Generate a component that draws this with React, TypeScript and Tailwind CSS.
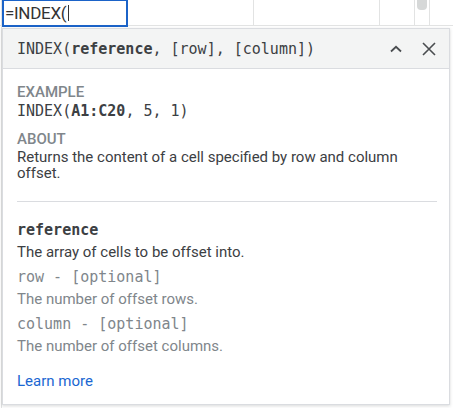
const sans = { fontFamily: "Roboto, 'Noto Sans', Arial, sans-serif" };
const mono = { fontFamily: "'DejaVu Sans Mono', 'Liberation Mono', monospace" };

type Param = { name: string; optional?: boolean; desc: string };

const params: Param[] = [
  { name: "reference", desc: "The array of cells to be offset into." },
  { name: "row", optional: true, desc: "The number of offset rows." },
  { name: "column", optional: true, desc: "The number of offset columns." },
];

const GridRow = () => (
  <div className="flex h-[26px] border-b border-[#e2e3e3]">
    <div className="w-[2px] border-r border-[#e2e3e3]" />
    <div className="w-[126px] border-r border-[#e2e3e3]" />
    <div className="w-[126px] border-r border-[#e2e3e3]" />
    <div className="w-[126px] border-r border-[#e2e3e3]" />
    <div className="w-[35px] border-r border-[#e2e3e3]" />
    <div className="w-[15px] border-r border-[#e2e3e3]" />
    <div className="flex-1" />
  </div>
);

const CellEditor = () => (
  <div
    className="absolute left-[2px] top-[-1px] flex h-[28px] w-[126px] items-center border-2 border-[#1b63c8] bg-white pl-[1px] text-[17px] leading-none text-[#333]"
    style={sans}
  >
    <span className="tracking-[-0.3px]">=INDEX(</span>
    <span className="ml-[2px] h-[16px] w-px bg-[#333]" />
  </div>
);

const ScrollThumb = () => (
  <div className="absolute left-[417px] top-0 h-[10px] w-[10px] rounded-b-[4px] bg-[#d6d8d8]" />
);

const ChevronUp = () => (
  <svg width="12" height="8" viewBox="0 0 12 8" fill="none">
    <path d="M1 6.5L6 1.8L11 6.5" stroke="#4a4d50" strokeWidth="1.8" />
  </svg>
);

const CloseX = () => (
  <svg width="14" height="14" viewBox="0 0 14 14" fill="none">
    <path d="M1 1L13 13M13 1L1 13" stroke="#4a4d50" strokeWidth="1.6" />
  </svg>
);

const HelpPopup = () => (
  <div className="absolute left-[2px] top-[28px] w-[448px] border border-[#dadce0] bg-white shadow-[0_1px_3px_rgba(60,64,67,0.2)]">
    {/* header: signature + controls */}
    <div className="flex h-[40px] items-center justify-between border-b border-[#dadce0] bg-[#f3f4f4] pl-[14px] pr-[13px]">
      <div className="mt-[1px] text-[15px] leading-5 text-[#3c4043]" style={mono}>
        INDEX(<b className="font-bold">reference</b>, [row], [column])
      </div>
      <div className="flex items-center">
        <span className="mr-[20px] mt-[1px] flex">
          <ChevronUp />
        </span>
        <span className="flex">
          <CloseX />
        </span>
      </div>
    </div>

    <div className="pl-[14px] pr-[12px] pt-[14px] pb-[12px]">
      <div className="text-[15px] font-medium leading-[18px] text-[#80868b]" style={sans}>
        EXAMPLE
      </div>
      <div className="text-[15px] leading-5 text-[#3c4043]" style={mono}>
        INDEX(<b className="font-bold">A1:C20</b>, 5, 1)
      </div>

      <div className="mt-[8px] text-[15px] font-medium leading-5 text-[#80868b]" style={sans}>
        ABOUT
      </div>
      <p className="text-[15px] leading-4 text-[#3c4043]" style={sans}>
        Returns the content of a cell specified by row and column offset.
      </p>

      <div className="mt-[20px] border-t border-[#dadce0]" />

      <div className="mt-[17px]">
        {params.map((p, i) => (
          <div key={p.name} className={i > 0 ? "mt-[3px]" : ""}>
            <div
              className={`text-[15px] leading-[22px] ${p.optional ? "text-[#80868b]" : "font-bold text-[#3c4043]"}`}
              style={mono}
            >
              {p.optional ? `${p.name} - [optional]` : p.name}
            </div>
            <div
              className={`text-[15px] leading-[22px] ${p.optional ? "text-[#80868b]" : "text-[#3c4043]"}`}
              style={sans}
            >
              {p.desc}
            </div>
          </div>
        ))}
      </div>

      <div className="mt-[13px] text-[15px] leading-[22px] text-[#1a67d2]" style={sans}>
        Learn more
      </div>
    </div>
  </div>
);

export default function App() {
  return (
    <div className="relative h-[408px] w-[453px] overflow-hidden bg-white">
      <GridRow />
      <div className="flex h-[382px]">
        <div className="w-[2px] border-r border-[#e2e3e3]" />
      </div>
      <CellEditor />
      <ScrollThumb />
      <HelpPopup />
    </div>
  );
}
